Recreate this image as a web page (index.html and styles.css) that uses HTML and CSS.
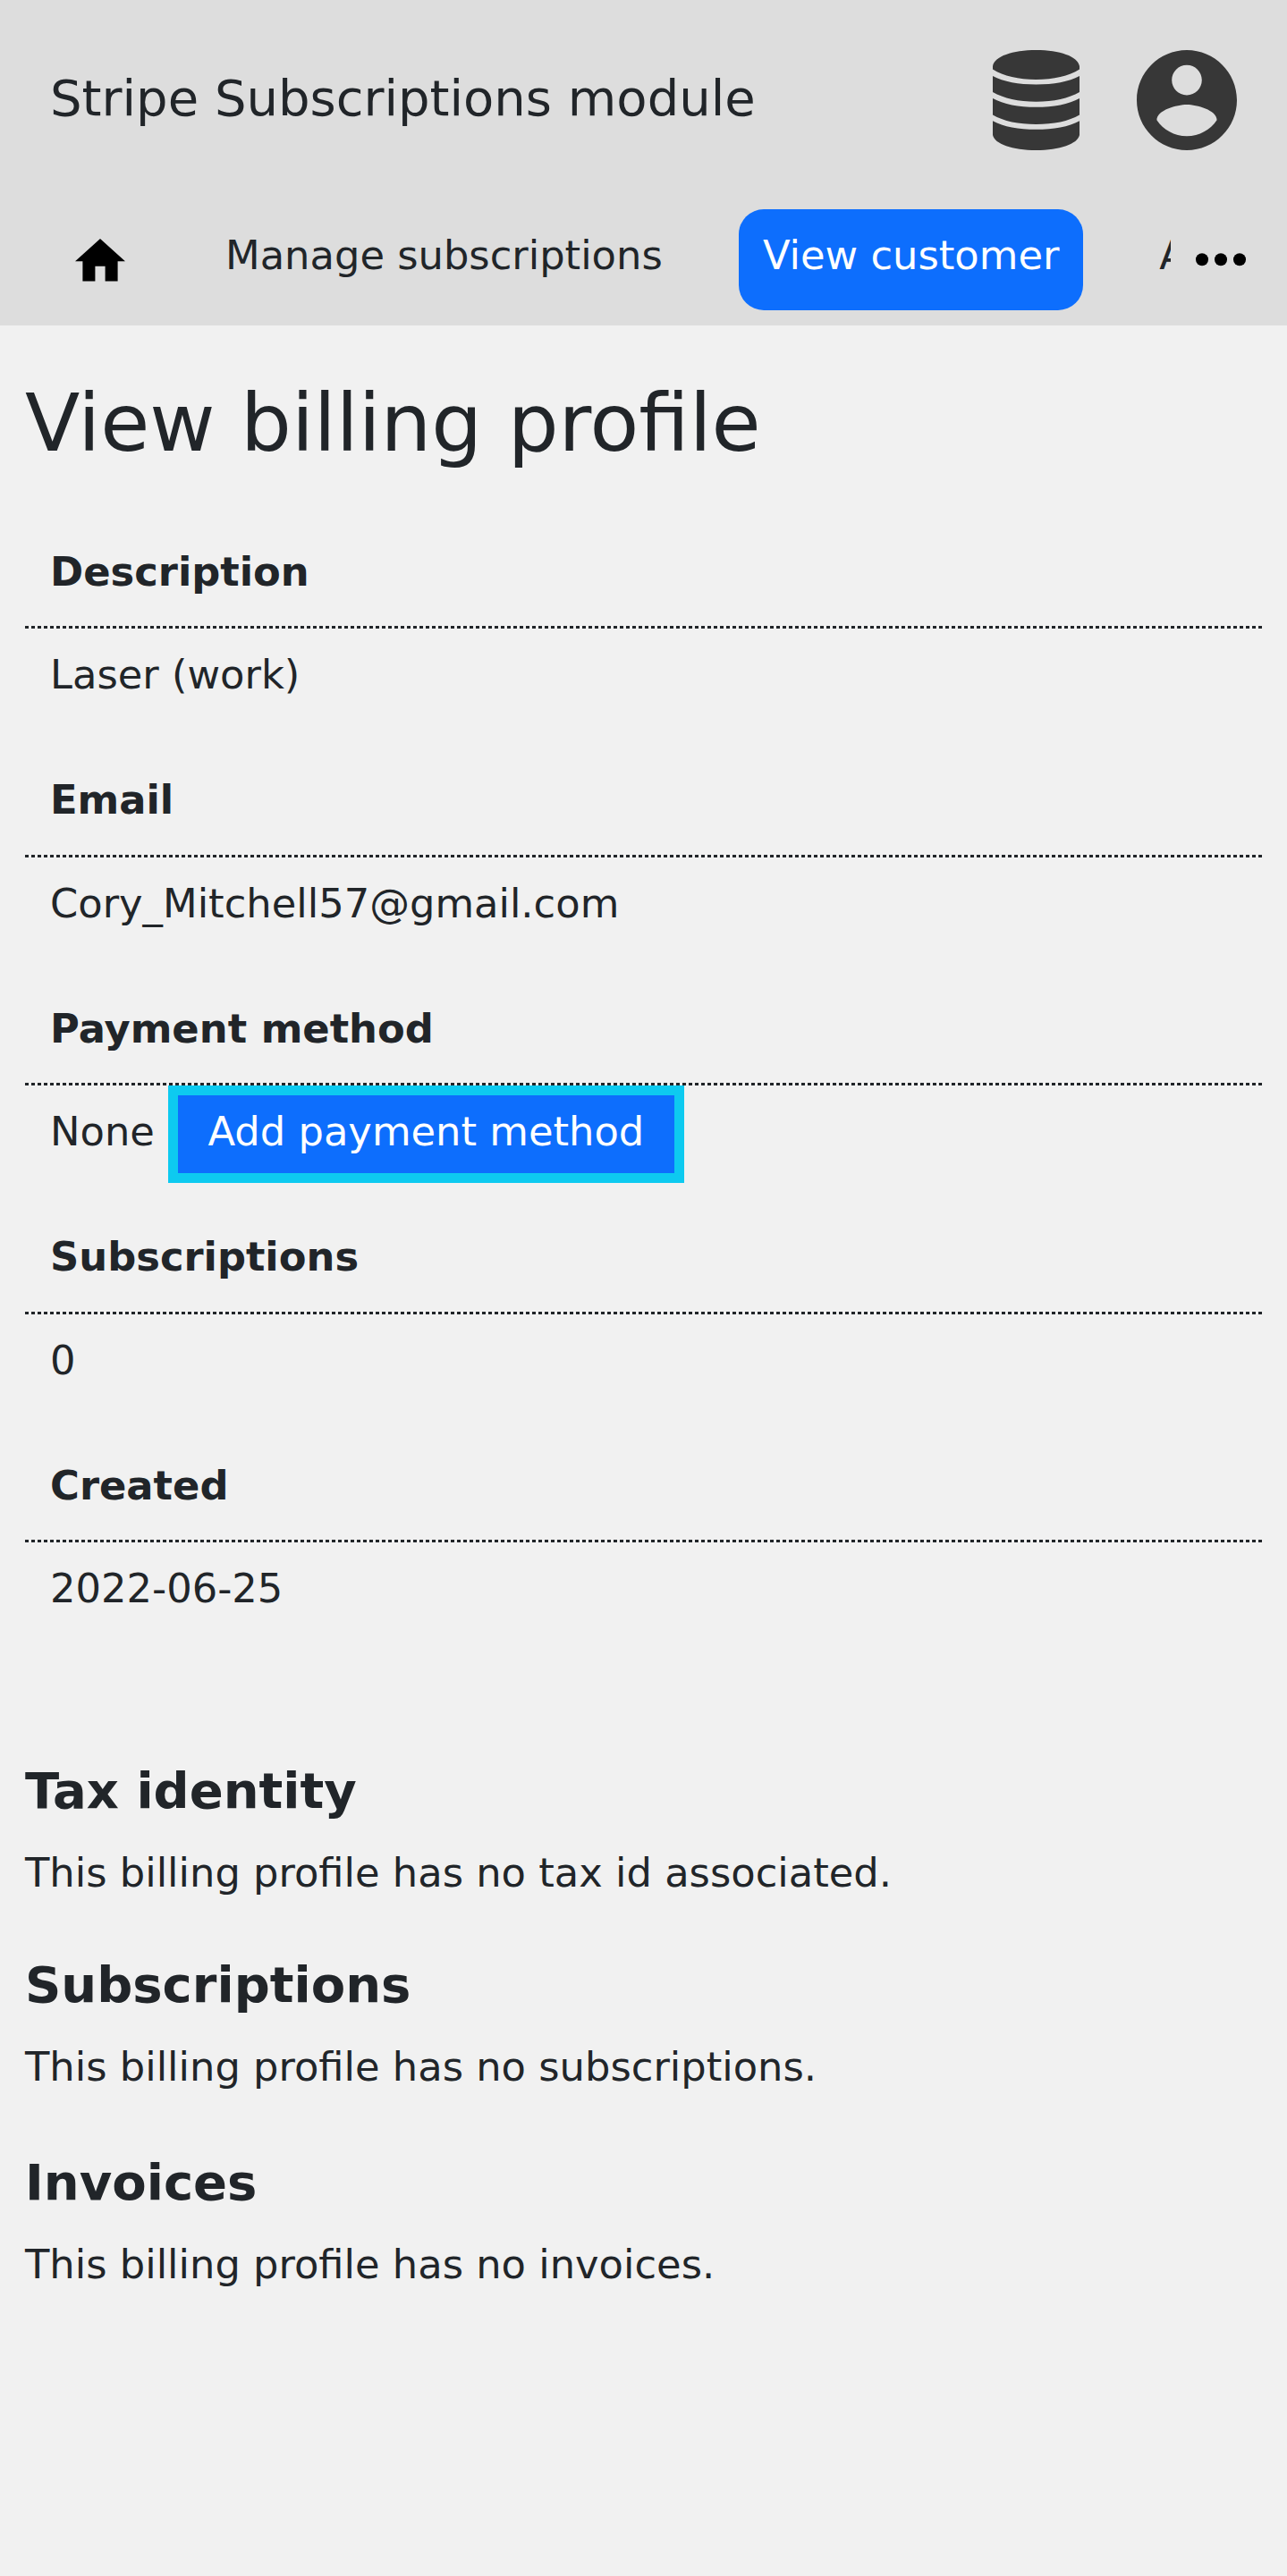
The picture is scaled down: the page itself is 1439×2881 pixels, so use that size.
FILE: index.html
```html
<!DOCTYPE html>
<html lang="en">
<head>
<meta charset="utf-8">
<title>View billing profile</title>
<link rel="stylesheet" href="styles.css">
</head>
<body>
<header>
  <div class="top">
    <div class="brand">Stripe Subscriptions module</div>
    <svg class="database" viewBox="0 0 97 112"><path d="M0 18C2 7 22 0 48.500 0S95 7 97 18v3.500C85 29 68 33 48.500 33S12 29 0 21.500zM0 29c12 6.500 29 9.500 48.500 9.500S85 35.500 97 29v18c-12 7-29 10.700-48.500 10.700S12 54 0 47zM0 54c12 6.700 29 9.800 48.500 9.800S85 60.700 97 54v18.500c-12 7-29 10.500-48.500 10.500S12 79.500 0 72.500zM0 79.200c12 6.700 29 9.600 48.500 9.600S85 85.900 97 79.200V95c-2 10-22 17-48.500 17S2 105 0 95z"/></svg>
    <svg class="account" viewBox="2 2 20 20"><path d="M12 2C6.480 2 2 6.480 2 12s4.480 10 10 10 10-4.480 10-10S17.520 2 12 2zm0 3c1.660 0 3 1.340 3 3s-1.340 3-3 3-3-1.340-3-3 1.340-3 3-3zm0 14.200c-2.500 0-4.710-1.280-6-3.220.030-1.990 4-3.080 6-3.080 1.990 0 5.970 1.090 6 3.080-1.290 1.940-3.500 3.220-6 3.220z"/></svg>
  </div>
  <nav>
    <a class="home"><svg viewBox="2 3 20 17"><path d="M10 20v-6h4v6h5v-8h3L12 3 2 12h3v8z"/></svg></a>
    <a class="manage">Manage subscriptions</a>
    <a class="active">View customer</a>
    <a class="cut">Add</a>
    <svg class="more" viewBox="0 0 56 14"><circle cx="7" cy="7" r="7"/><circle cx="28" cy="7" r="7"/><circle cx="49" cy="7" r="7"/></svg>
  </nav>
</header>
<main>
  <h1>View billing profile</h1>
  <dl>
    <dt>Description</dt><dd>Laser (work)</dd>
    <dt>Email</dt><dd>Cory_Mitchell57@gmail.com</dd>
    <dt>Payment method</dt><dd>None <a class="button">Add payment method</a></dd>
    <dt>Subscriptions</dt><dd>0</dd>
    <dt>Created</dt><dd>2022-06-25</dd>
  </dl>
  <section><h2>Tax identity</h2><p>This billing profile has no tax id associated.</p></section>
  <section class="subscriptions"><h2>Subscriptions</h2><p>This billing profile has no subscriptions.</p></section>
  <section><h2>Invoices</h2><p>This billing profile has no invoices.</p></section>
</main>
</body>
</html>
```
FILE: styles.css
```css
* { box-sizing: border-box; }
body { margin: 0; min-height: 2881px; background: #f1f1f1; color: #212529; font: 44.8px/67.2px "DejaVu Sans", sans-serif; }
header { height: 363.6px; background: #ddd; }
.top { height: 224px; padding: 0 56px; display: flex; align-items: center; }
.brand { flex: 1; padding-bottom: 5px; font-size: 56px; }
.database { width: 97px; height: 112px; margin-right: 64px; fill: #373737; }
.account { width: 112px; height: 112px; fill: #373737; }
nav { height: 139.6px; padding: 10.4px 45px 0 84px; display: flex; align-items: flex-start; white-space: nowrap; }
nav > * { flex-shrink: 0; }
nav a { height: 112.4px; line-height: 103.4px; }
.home { width: 56px; padding-top: 32.6px; margin-right: 112px; }
.home svg { display: block; width: 56px; height: 47.6px; }
.manage { width: 488px; margin-right: 85.5px; }
.active { width: 385.4px; padding: 0 27.4px; border-radius: 28px; background: #0d6efd; color: #fff; }
.cut { width: 13px; margin-left: 85.3px; overflow: hidden; }
.more { width: 56px; height: 14.4px; margin: 49px 0 0 27.8px; }
main { padding: 0 28px; }
h1 { margin: 0; padding-top: 56.4px; font-size: 89.6px; line-height: 107.6px; font-weight: 400; }
dl { margin: 55.9px 0 0; }
dt, dd { margin: 0; padding: 0 28px; white-space: nowrap; }
dt {
  height: 120px;
  padding-top: 22.4px;
  font-weight: 700;
  background: repeating-linear-gradient(90deg, #212529 0 4px, transparent 4px 7px) left bottom / 100% 3px no-repeat;
}
dd { height: 135.5px; padding-top: 18px; }
.button { display: inline-block; height: 109.4px; margin: -21px 0 -21px 1px; padding: 7.6px 33.4px; border: 11px solid #0dcaf0; background: #0d6efd; color: #fff; }
dl + section { margin-top: 108.2px; }
section { height: 216.8px; }
.subscriptions { height: 221px; }
h2 { margin: 0 0 24.8px; font-size: 56px; line-height: 67.2px; }
p { margin: 0; }
```
